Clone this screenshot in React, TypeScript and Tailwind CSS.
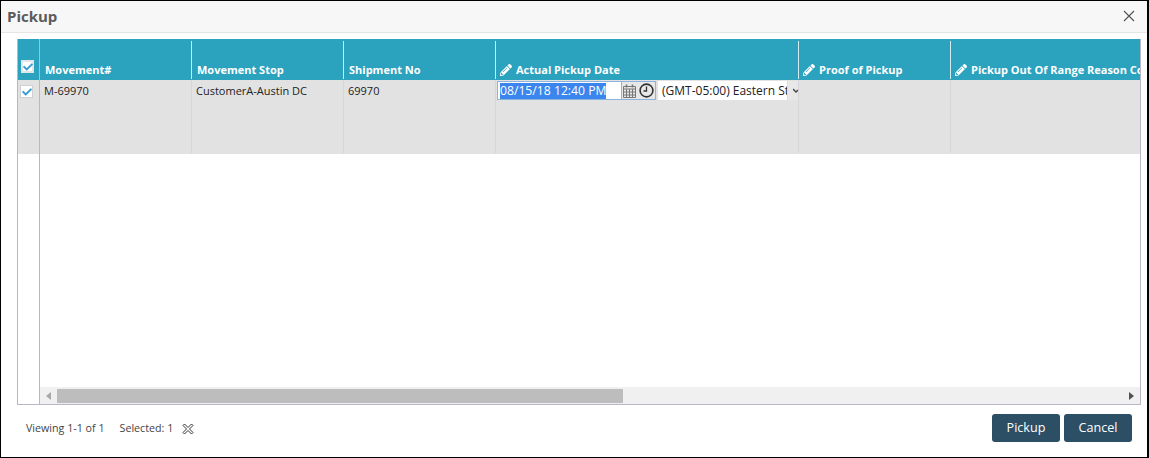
import { FaCheck, FaPencilAlt } from "react-icons/fa";

const font = { fontFamily: '"Open Sans", sans-serif' };

const HeaderCell = ({ width, label, edit }: { width: string; label: string; edit?: boolean }) => (
  <div className={`${width} flex h-[38px] shrink-0 items-end overflow-hidden whitespace-nowrap border-r border-[#d5e9f0] pb-[1px] pl-[5px] text-[11px] font-bold leading-[16px] text-white`}>
    {edit && <FaPencilAlt className="mb-[2px] mr-[4px] ml-[-1px] shrink-0 text-[12px]" />}
    {label}
  </div>
);

const BodyCell = ({ width, children }: { width: string; children?: React.ReactNode }) => (
  <div className={`${width} h-[73px] shrink-0 border-r border-[#d6d6da] pt-[3px] pl-[4px] text-[11px] leading-[16px] text-[#222]`}>
    {children}
  </div>
);

export default function App() {
  return (
    <div style={font} className="flex h-[458px] w-[1149px] flex-col overflow-hidden border-t border-b border-l border-r-2 border-black bg-white">
      <div className="flex h-[32px] shrink-0 items-center justify-between border-b border-[#e5e5e5] bg-[#f7f7f7] pb-[2px] pl-[6px] pr-[12px]">
        <span className="text-[15px] leading-[20px] font-bold text-[#5b5b5b]">Pickup</span>
        <svg width="12" height="12" viewBox="0 0 12 12" className="text-[#555]">
          <path d="M1 1l10 10M11 1L1 11" stroke="currentColor" strokeWidth="1.2" fill="none" />
        </svg>
      </div>

      <div className="mt-[6px] ml-[16px] mr-[6px] flex h-[366px] shrink-0 flex-col overflow-hidden border-r border-b border-l border-[#b7b7c9]">
        <div className="flex flex-1 overflow-hidden">
          <div className="flex w-[22px] shrink-0 flex-col border-r border-[#b7b7c9]">
            <div className="flex h-[41px] items-end bg-[#2ba2be] pb-[7px] pl-[3px]">
              <div className="flex h-[13px] w-[13px] items-center justify-center border-2 border-[#e2e6e8] bg-white text-[#3d9fd3]">
                <FaCheck className="shrink-0 text-[10px]" />
              </div>
            </div>
            <div className="flex h-[74px] bg-[#e2e2e2] pt-[5px] pl-[2px]">
              <div className="flex h-[13px] w-[13px] items-center justify-center border border-[#d0d0d0] bg-white text-[#3d9fd3]">
                <FaCheck className="shrink-0 text-[10px]" />
              </div>
            </div>
          </div>

          <div className="flex min-w-0 flex-1 flex-col overflow-hidden">
            <div className="flex h-[41px] items-end bg-[#2ba2be] pb-[1px]">
              <HeaderCell width="w-[152px]" label="Movement#" />
              <HeaderCell width="w-[152px]" label="Movement Stop" />
              <HeaderCell width="w-[152px]" label="Shipment No" />
              <HeaderCell width="w-[303px]" label="Actual Pickup Date" edit />
              <HeaderCell width="w-[152px]" label="Proof of Pickup" edit />
              <div className="flex h-[38px] items-end overflow-hidden whitespace-nowrap pb-[1px] pl-[5px] text-[11px] font-bold leading-[16px] text-white">
                <FaPencilAlt className="mb-[2px] mr-[4px] ml-[-1px] shrink-0 text-[12px]" />
                Pickup Out Of Range Reason Code
              </div>
            </div>
            <div className="flex h-[74px] bg-[#e2e2e2]">
              <BodyCell width="w-[152px]">M-69970</BodyCell>
              <BodyCell width="w-[152px]">CustomerA-Austin DC</BodyCell>
              <BodyCell width="w-[152px]">69970</BodyCell>
              <div className="flex h-[73px] w-[303px] shrink-0 items-start border-r border-[#d6d6da] pl-[1px] pt-[1px]">
                <div className="flex h-[19px] w-[159px] shrink-0 border border-[#8ab4dc] bg-white">
                  <div className="flex h-[17px] w-[124px] shrink-0 items-center border-r border-[#8ab4dc] pl-[2px] text-[12.2px] leading-[16px]">
                    <span className="bg-[#3b86ee] text-white">08/15/18 12:40 PM</span>
                  </div>
                  <div className="flex h-[17px] flex-1 items-center justify-around bg-[#e8e8e8]">
                    {/* calendar, drawn because the packaged one is solid */}
                    <svg width="13" height="14" viewBox="0 0 13 14" fill="none" stroke="#777" strokeWidth="1">
                      <path d="M.5 2.5h12v11H.5zM.5 5h12M.5 8h12M.5 11h12M3.5 5v8.5M6.5 5v8.5M9.5 5v8.5" />
                      <path d="M3.5 .5v3M9.5 .5v3" strokeWidth="1.6" />
                    </svg>
                    <svg width="15" height="15" viewBox="0 0 15 15" fill="none" stroke="#333">
                      <circle cx="7.5" cy="7.5" r="6.4" strokeWidth="1.6" />
                      <path d="M7.5 3.5v4.5H4.5" strokeWidth="1.3" />
                    </svg>
                  </div>
                </div>
                <div className="ml-[2px] flex h-[19px] min-w-0 flex-1 overflow-hidden bg-white">
                  <span className="w-[129px] shrink-0 overflow-hidden whitespace-nowrap pl-[4px] text-[12px] leading-[19px] text-[#222]">
                    (GMT-05:00) Eastern Standard Time
                  </span>
                  <div className="flex flex-1 items-center justify-end overflow-hidden border-l border-[#ddd] bg-[#e8e8e8]">
                    <svg width="5" height="5" viewBox="0 0 5 5" className="shrink-0">
                      <path d="M0 1l3 3 2-2" stroke="#444" strokeWidth="1.4" fill="none" />
                    </svg>
                  </div>
                </div>
              </div>
              <BodyCell width="w-[152px]" />
            </div>
          </div>
        </div>

        <div className="flex h-[17px] shrink-0">
          <div className="w-[22px] shrink-0 border-r border-[#b7b7c9]" />
          <div className="flex flex-1 items-center bg-[#f0f0f0]">
            <div className="flex w-[17px] justify-center">
              <svg width="5" height="8" viewBox="0 0 5 8"><path d="M5 0v8L0 4z" fill="#a8a8a8" /></svg>
            </div>
            <div className="h-[14px] w-[566px] bg-[#bdbdbd]" />
            <div className="flex-1" />
            <div className="flex w-[17px] justify-center">
              <svg width="5" height="8" viewBox="0 0 5 8"><path d="M0 0v8l5-4z" fill="#505050" /></svg>
            </div>
          </div>
        </div>
      </div>

      <div className="flex flex-1 items-start justify-between pl-[25px] pr-[15px] pt-[9px]">
        <div className="flex h-[28px] items-center pt-[1px] text-[10.7px] text-[#444]">
          <span>Viewing 1-1 of 1</span>
          <span className="ml-[15px]">Selected: 1</span>
          <svg width="12" height="12" viewBox="0 0 12 12" className="ml-[9px]">
            <path d="M1 2.5L2.5 1 6 4.5 9.5 1 11 2.5 7.5 6 11 9.5 9.5 11 6 7.5 2.5 11 1 9.5 4.5 6z" fill="#fff" stroke="#333" strokeWidth="1" />
          </svg>
        </div>
        <div className="flex gap-[4px]">
          <button className="h-[28px] w-[68px] rounded-[3px] bg-[#2d4f66] pt-[1px] text-[12.6px] text-white">Pickup</button>
          <button className="h-[28px] w-[68px] rounded-[3px] bg-[#2d4f66] pt-[1px] text-[12.6px] text-white">Cancel</button>
        </div>
      </div>
    </div>
  );
}
